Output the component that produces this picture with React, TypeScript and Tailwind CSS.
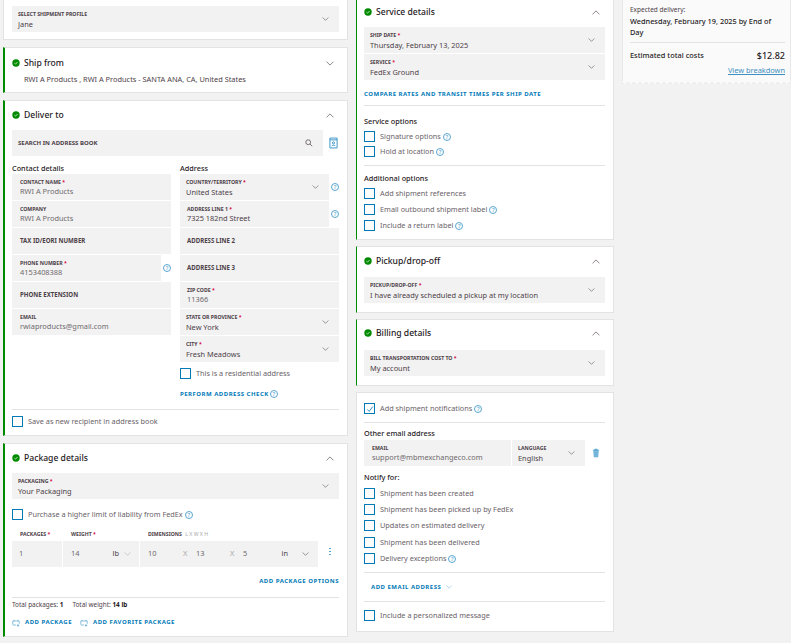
import React from "react";

const Chevron = ({ up, className = "w-[8px] h-[5px] text-[#4d4148]" }: { up?: boolean; className?: string }) => (
  <svg viewBox="0 0 10 6" className={className} fill="none" stroke="currentColor" strokeWidth="0.8">
    <path d={up ? "M0.7 5.3 5 1l4.3 4.3" : "M0.7 0.7 5 5l4.3-4.3"} />
  </svg>
);

const Help = ({ className = "" }: { className?: string }) => (
  <span className={`inline-flex shrink-0 items-center justify-center w-[8px] h-[8px] rounded-full border-[0.8px] border-[#5aa6d2] text-[#3f97c9] text-[6px] leading-none ${className}`}>
    ?
  </span>
);

const Req = () => <span className="text-[#d6003c]"> *</span>;

const Check = ({ label, help, checked, className = "" }: { label: string; help?: boolean; checked?: boolean; className?: string }) => (
  <div className={`flex items-center ${className}`}>
    <span className="flex items-center justify-center w-[11px] h-[11px] border border-[#007ab7] bg-white shrink-0">
      {checked && (
        <svg viewBox="0 0 10 10" className="w-[8px] h-[8px]" fill="none" stroke="#007ab7" strokeWidth="1">
          <path d="M1.5 5.5 4 8l4.5-6" />
        </svg>
      )}
    </span>
    <span className="ml-[5px] text-[7.3px] text-[#6a6269] whitespace-nowrap">{label}</span>
    {help && <Help className="ml-[2px]" />}
  </div>
);

const Field = ({
  label,
  value,
  req,
  select,
  muted,
  px = "px-[6px]",
  className = "",
}: {
  label: string;
  value?: string;
  req?: boolean;
  select?: boolean;
  muted?: boolean;
  px?: string;
  className?: string;
}) => (
  <div className={`relative h-[26px] bg-[#f2f2f2] flex flex-col ${value ? "justify-start pt-[5px]" : "justify-center"} ${px} ${className}`}>
    {value ? (
      <>
        <div className="text-[5.2px] leading-[7px] font-bold text-[#4d4148] uppercase whitespace-nowrap">
          {label}
          {req && <Req />}
        </div>
        <div className={`text-[7.4px] leading-[11px] whitespace-nowrap ${select ? "mt-[1px]" : ""} ${muted ? "text-[#6f6a6e]" : "text-[#4d4148]"}`}>{value}</div>
      </>
    ) : (
      <div className="text-[6.1px] font-bold text-[#4d4148] uppercase whitespace-nowrap">{label}</div>
    )}
    {select && (
      <div className="absolute right-[10px] top-[11px]">
        <Chevron className="w-[7px] h-[4px] text-[#4d4148]" />
      </div>
    )}
  </div>
);

const Card = ({ green = true, thin, className = "", children }: { green?: boolean; thin?: boolean; className?: string; children: React.ReactNode }) => (
  <div
    className={`bg-white border border-[#e3e3e3] pr-[8px] ${
      thin ? "border-l-[#008a00] pl-[7px]" : green ? "border-l-2 border-l-[#008a00] pl-[7px]" : "pl-[8px]"
    } ${className}`}
  >
    {children}
  </div>
);

const Title = ({ text, up = true, className = "" }: { text: string; up?: boolean; className?: string }) => (
  <div className={`flex items-center h-[16px] ${className}`}>
    <svg viewBox="0 0 8 8" className="w-[8px] h-[8px] shrink-0">
      <circle cx="4" cy="4" r="3.7" fill="#008a00" />
      <path d="M2.4 4.1 3.5 5.1 5.6 3" fill="none" stroke="#fff" strokeWidth="0.7" />
    </svg>
    <span className="ml-[4px] text-[8.6px] font-medium text-[#1f1a1e]">{text}</span>
    <div className="ml-auto mr-[5px]">
      <Chevron up={up} />
    </div>
  </div>
);

const Rule = ({ className = "" }: { className?: string }) => <div className={`h-px bg-[#e3e3e3] ${className}`} />;

const Link = ({ text, className = "" }: { text: string; className?: string }) => (
  <span className={`text-[6px] font-bold uppercase tracking-[0.5px] text-[#007ab7] whitespace-nowrap ${className}`}>{text}</span>
);

const SubHead = ({ text, className = "" }: { text: string; className?: string }) => (
  <div className={`text-[7.3px] leading-[10px] font-medium text-[#1f1a1e] ${className}`}>{text}</div>
);

const Trash = () => (
  <svg viewBox="0 0 10 12" className="w-[8px] h-[10px]" fill="#8cc3e2" stroke="#3f97c9" strokeWidth="0.6">
    <path d="M1 2.5h8M3.5 2.5V1h3v1.5M2 2.5l.6 8.5h4.8L8 2.5z" />
    <path d="M4 4v5.5M6 4v5.5" fill="none" />
  </svg>
);

const AddIcon = () => (
  <svg viewBox="0 0 10 10" className="w-[8px] h-[8px]" fill="none" stroke="#2f8fc4" strokeWidth="0.7">
    <path d="M1 7V2.5h8V6M2.5 2.5V1M7.5 2.5V1M1 7.5h4M7.5 6.5v3M6 8h3" />
  </svg>
);

export default function App() {
  return (
    <div className="h-[643px] overflow-hidden bg-[#f2f2f2] flex pl-[3px] gap-[8px] font-['Noto_Sans',sans-serif]">
      <div className="w-[345px] shrink-0 flex flex-col gap-[7px] -mt-[10px]">
        <Card green={false} className="pt-[15px] pb-[7px]">
          <Field label="Select shipment profile" value="Jane" select />
        </Card>

        <Card className="h-[46px] pt-[7px]">
          <Title text="Ship from" up={false} />
          <div className="mt-[3px] pl-[12px] text-[7.4px] leading-[11px] text-[#4d4148] whitespace-nowrap">
            RWI A Products , RWI A Products - SANTA ANA, CA, United States
          </div>
        </Card>

        <Card className="h-[336px] pt-[6px]">
          <Title text="Deliver to" />
          <div className="mt-[7px] flex items-center">
            <div className="relative w-[311px] h-[26px] bg-[#f2f2f2] flex items-center px-[6px] text-[6px] font-bold text-[#4d4148] uppercase">
              Search in address book
              <svg viewBox="0 0 10 10" className="absolute right-[10px] top-[9px] w-[8px] h-[8px]" fill="none" stroke="#4d4148" strokeWidth="0.9">
                <circle cx="4" cy="4" r="3" />
                <path d="M6.3 6.3 9 9" />
              </svg>
            </div>
            <svg viewBox="0 0 10 13" className="ml-[6px] w-[9px] h-[12px]" fill="none" stroke="#2f8fc4" strokeWidth="1">
              <path d="M1 1h8v11H1zM1 3h8" />
              <circle cx="5" cy="6.3" r="1.2" />
              <path d="M3 10c.3-1.5 3.7-1.5 4 0" />
            </svg>
          </div>
          <div className="mt-[7px] grid grid-cols-[159px_159px] gap-x-[9px]">
            <div>
              <SubHead text="Contact details" className="h-[11px]" />
              <div className="flex flex-col gap-px">
                <Field px="px-[8px]" label="Contact name" value="RWI A Products" req muted />
                <Field px="px-[8px]" label="Company" value="RWI A Products" muted />
                <Field px="px-[8px]" label="Tax ID/EORI number" />
                <div className="relative">
                  <Field px="px-[8px]" label="Phone number" value="4153408388" req muted className="w-[149px]" />
                  <Help className="absolute right-0 top-[9px]" />
                </div>
                <Field px="px-[8px]" label="Phone extension" />
                <Field px="px-[8px]" label="Email" value="rwiaproducts@gmail.com" muted />
              </div>
            </div>
            <div>
              <SubHead text="Address" className="h-[11px]" />
              <div className="flex flex-col gap-px">
                <div className="relative">
                  <Field label="Country/territory" value="United States" req select className="w-[149px]" />
                  <Help className="absolute right-0 top-[9px]" />
                </div>
                <div className="relative">
                  <Field px="px-[7px]" label="Address line 1" value="7325 182nd Street" req className="w-[149px]" />
                  <Help className="absolute right-0 top-[9px]" />
                </div>
                <Field px="px-[7px]" label="Address line 2" />
                <Field px="px-[7px]" label="Address line 3" />
                <Field px="px-[7px]" label="Zip code" value="11366" req muted />
                <Field label="State or province" value="New York" req select />
                <Field label="City" value="Fresh Meadows" req select />
              </div>
              <Check label="This is a residential address" className="mt-[6px]" />
              <div className="mt-[10px] flex items-center h-[10px]">
                <Link text="Perform address check" />
                <Help className="ml-[1px]" />
              </div>
            </div>
          </div>
          <Rule className="mt-[10px]" />
          <Check label="Save as new recipient in address book" className="mt-[6px]" />
        </Card>

        <Card className="h-[194px] pt-[6px]">
          <Title text="Package details" />
          <Field label="Packaging" value="Your Packaging" req select className="mt-[7px]" />
          <Check label="Purchase a higher limit of liability from FedEx" help className="mt-[10px]" />
          <div className="mt-[7px] flex">
            <div className="w-[51px] pl-[8px] text-[5.2px] leading-[14px] font-bold text-[#4d4148] uppercase">
              Packages<Req />
            </div>
            <div className="w-[77px] pl-[8px] text-[5.2px] leading-[14px] font-bold text-[#4d4148] uppercase">
              Weight<Req />
            </div>
            <div className="pl-[8px] text-[5.2px] leading-[14px] font-bold text-[#4d4148] uppercase">
              Dimensions <span className="ml-[2px] font-normal text-[#a9a9a9]">L x W x H</span>
            </div>
          </div>
          <div className="flex items-center gap-px text-[7.4px] text-[#6f6a6e]">
            <div className="w-[50px] h-[26px] bg-[#f2f2f2] flex items-center pl-[7px]">1</div>
            <div className="w-[76px] h-[26px] bg-[#f2f2f2] flex items-center pl-[8px]">
              14
              <span className="ml-auto text-[#4d4148] -mt-[1px]">lb</span>
              <Chevron className="w-[7px] h-[4px] ml-[5px] mr-[8px] text-[#a9a9a9]" />
            </div>
            <div className="w-[178px] h-[26px] bg-[#f2f2f2] flex items-center pl-[8px]">
              <span className="w-[35px]">10</span>
              <span className="w-[13px] text-[#a9a9a9]">X</span>
              <span className="w-[34px]">13</span>
              <span className="w-[13px] text-[#a9a9a9]">X</span>
              <span>5</span>
              <span className="ml-auto text-[#4d4148] -mt-[1px]">in</span>
              <Chevron className="w-[7px] h-[4px] ml-[14px] mr-[9px] text-[#4d4148]" />
            </div>
            <div className="ml-[10px] -mt-[5px] flex flex-col gap-[1.5px]">
              <span className="w-[1.5px] h-[1.5px] bg-[#5aa6d2]" />
              <span className="w-[1.5px] h-[1.5px] bg-[#5aa6d2]" />
              <span className="w-[1.5px] h-[1.5px] bg-[#5aa6d2]" />
            </div>
          </div>
          <div className="mt-[10px] h-[10px] flex justify-end">
            <Link text="Add package options" />
          </div>
          <Rule className="mt-[10px]" />
          <div className="mt-[1px] text-[6.4px] leading-[12px] text-[#4d4148] whitespace-nowrap">
            Total packages: <b className="text-[#1f1a1e]">1</b>
            <span className="ml-[9px]">Total weight: </span>
            <b className="text-[#1f1a1e]">14 lb</b>
          </div>
          <div className="mt-[7px] flex items-center">
            <AddIcon />
            <Link text="Add package" className="ml-[5px]" />
            <span className="ml-[8px]">
              <AddIcon />
            </span>
            <Link text="Add favorite package" className="ml-[5px]" />
          </div>
        </Card>
      </div>

      <div className="w-[258px] shrink-0 flex flex-col gap-[6px] -mt-[4px]">
        <Card thin className="h-[244px] pt-[7px]">
          <Title text="Service details" />
          <div className="mt-[7px] flex flex-col gap-px">
            <Field label="Ship date" value="Thursday, February 13, 2025" req select />
            <Field label="Service" value="FedEx Ground" req select />
          </div>
          <div className="mt-[9px] h-[10px] leading-[10px] flex">
            <Link text="Compare rates and transit times per ship date" />
          </div>
          <Rule className="mt-[6px]" />
          <SubHead text="Service options" className="mt-[10px]" />
          <Check label="Signature options" help className="mt-[5px]" />
          <Check label="Hold at location" help className="mt-[4px]" />
          <Rule className="mt-[8px]" />
          <SubHead text="Additional options" className="mt-[7px]" />
          <Check label="Add shipment references" className="mt-[5px]" />
          <Check label="Email outbound shipment label" help className="mt-[5px]" />
          <Check label="Include a return label" help className="mt-[5px]" />
        </Card>

        <Card thin className="h-[67px] pt-[6px]">
          <Title text="Pickup/drop-off" />
          <Field label="Pickup/drop-off" value="I have already scheduled a pickup at my location" req select className="mt-[8px]" />
        </Card>

        <Card thin className="h-[67px] pt-[5px]">
          <Title text="Billing details" />
          <Field label="Bill transportation cost to" value="My account" req select className="mt-[9px]" />
        </Card>

        <Card green={false} className="h-[240px] pt-[10px] !pl-[7px]">
          <Check label="Add shipment notifications" help checked />
          <Rule className="mt-[8px]" />
          <SubHead text="Other email address" className="mt-[5px]" />
          <div className="mt-[2px] flex items-center">
            <Field px="px-[8px]" label="Email" value="support@mbmexchangeco.com" muted className="w-[147px]" />
            <div className="relative ml-px w-[73px]">
              <Field label="Language" value="English" select />
            </div>
            <span className="ml-[7px] -mt-[1px]">
              <Trash />
            </span>
          </div>
          <SubHead text="Notify for:" className="mt-[6px]" />
          <Check label="Shipment has been created" className="mt-[6px]" />
          <Check label="Shipment has been picked up by FedEx" className="mt-[5px]" />
          <Check label="Updates on estimated delivery" className="mt-[5px]" />
          <Check label="Shipment has been delivered" className="mt-[6px]" />
          <Check label="Delivery exceptions" help className="mt-[5px]" />
          <Rule className="mt-[8px]" />
          <div className="h-[28px] flex items-center pl-[7px]">
            <Link text="Add email address" />
            <Chevron className="ml-[5px] w-[6px] h-[4px] text-[#5aa6d2]" />
          </div>
          <Rule />
          <Check label="Include a personalized message" className="mt-[8px]" />
        </Card>
      </div>

      <div className="w-[169px] shrink-0 self-start">
        <div className="h-[81px] bg-[#fafafa] border-x border-[#e8e8e8] pl-[7px] pr-[5px] pt-[6px]">
          <div className="text-[6.5px] leading-[8px] text-[#4d4148]">Expected delivery:</div>
          <div className="mt-[2px] w-[150px] text-[7.35px] leading-[10.5px] font-medium text-[#1f1a1e]">Wednesday, February 19, 2025 by End of Day</div>
          <Rule className="mt-[5px]" />
          <div className="mt-[6px] flex items-center justify-between">
            <span className="text-[7.4px] font-medium text-[#1f1a1e]">Estimated total costs</span>
            <span className="text-[9px] font-medium text-[#1f1a1e]">$12.82</span>
          </div>
          <div className="mt-[2px] text-right text-[7.4px] leading-[10px] text-[#3f8fc0] underline">View breakdown</div>
        </div>
        <div className="h-[3px] bg-[radial-gradient(circle_at_3px_0,#fafafa_2.5px,#e8e8e8_3px,transparent_3.5px)] bg-[length:6px_3px] bg-repeat-x" />
      </div>
    </div>
  );
}
